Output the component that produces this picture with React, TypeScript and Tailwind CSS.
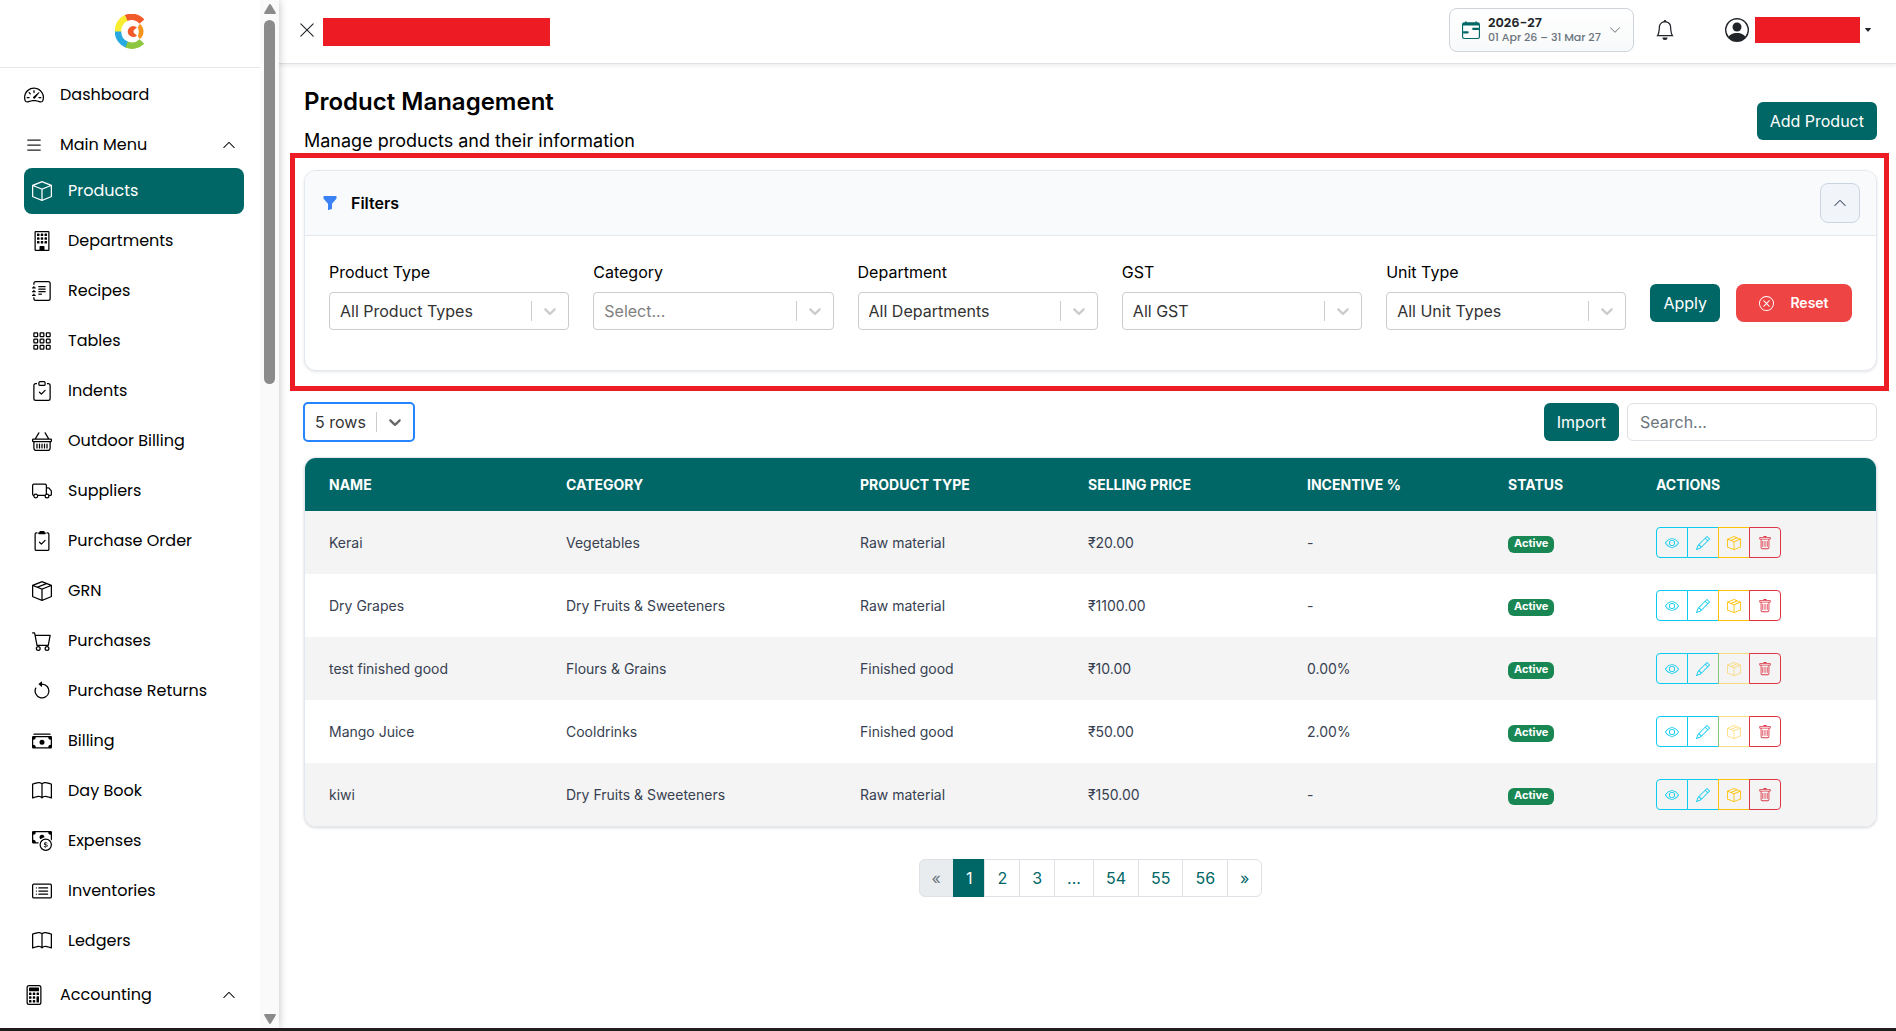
import React from "react";
import type { IconType } from "react-icons";
import {
  BsSpeedometer2, BsList, BsBox, BsBuilding, BsJournalText, BsGrid3X3Gap, BsClipboardCheck,
  BsBasket, BsTruck, BsClipboard2Check, BsBoxSeam, BsCart, BsArrowCounterclockwise, BsCashStack,
  BsBook, BsCashCoin, BsCardList, BsCalculator, BsChevronUp, BsChevronDown, BsXLg, BsCalendarRange,
  BsBell, BsPersonCircle, BsFunnelFill, BsXCircle, BsEye, BsPencil, BsTrash, BsCaretDownFill,
} from "react-icons/bs";

const menu: { label: string; icon: IconType }[] = [
  { label: "Products", icon: BsBox },
  { label: "Departments", icon: BsBuilding },
  { label: "Recipes", icon: BsJournalText },
  { label: "Tables", icon: BsGrid3X3Gap },
  { label: "Indents", icon: BsClipboardCheck },
  { label: "Outdoor Billing", icon: BsBasket },
  { label: "Suppliers", icon: BsTruck },
  { label: "Purchase Order", icon: BsClipboard2Check },
  { label: "GRN", icon: BsBoxSeam },
  { label: "Purchases", icon: BsCart },
  { label: "Purchase Returns", icon: BsArrowCounterclockwise },
  { label: "Billing", icon: BsCashStack },
  { label: "Day Book", icon: BsBook },
  { label: "Expenses", icon: BsCashCoin },
  { label: "Inventories", icon: BsCardList },
  { label: "Ledgers", icon: BsBook },
];

const filters = [
  { id: "product-type", label: "Product Type", value: "All Product Types" },
  { id: "category", label: "Category", value: "Select..." },
  { id: "department", label: "Department", value: "All Departments" },
  { id: "gst", label: "GST", value: "All GST" },
  { id: "unit-type", label: "Unit Type", value: "All Unit Types" },
];

const columns = ["Name", "Category", "Product Type", "Selling Price", "Incentive %", "Status", "Actions"];

const products = [
  { name: "Kerai", category: "Vegetables", type: "Raw material", price: "₹20.00", incentive: "-" },
  { name: "Dry Grapes", category: "Dry Fruits & Sweeteners", type: "Raw material", price: "₹1100.00", incentive: "-" },
  { name: "test finished good", category: "Flours & Grains", type: "Finished good", price: "₹10.00", incentive: "0.00%" },
  { name: "Mango Juice", category: "Cooldrinks", type: "Finished good", price: "₹50.00", incentive: "2.00%" },
  { name: "kiwi", category: "Dry Fruits & Sweeteners", type: "Raw material", price: "₹150.00", incentive: "-" },
];

const pages = ["2", "3", "...", "54", "55", "56", "»"];

function Logo() {
  return (
    <svg viewBox="0 0 30 35" className="h-[35px] w-[30px]" role="img" aria-label="Logo">
      <g fill="none" strokeWidth="6.5">
        <path d="M10.9 4.1A14 14 0 0 1 26.9 7.6" stroke="#f15a29" />
        <path d="M3.1 18.5A14 14 0 0 1 11.2 4" stroke="#f9ed32" />
        <path d="M12 30.7A14 14 0 0 1 3 17.5" stroke="#27aae1" />
        <path d="M26.9 27.4A14 14 0 0 1 11.6 30.6" stroke="#8dc63f" />
      </g>
      <path d="M25 10q3.5 3 3.5 7.5T25 25q-2-1.500-2-3.500 1.500-4 0-8 0-2 2-3.500z" fill="#f7941e" />
      <path d="M22 13.500A5.500 5.500 0 1 0 22 21.500L19.500 19.500A2.500 2.500 0 0 1 19.500 15.500z" fill="#f15a29" />
    </svg>
  );
}

function Chevron() {
  return (
    <svg viewBox="0 0 20 20" className="size-5 fill-current" aria-hidden="true">
      <path d="M4.516 7.548c0.436-0.446 1.043-0.481 1.576 0l3.908 3.747 3.908-3.747c0.533-0.481 1.141-0.446 1.574 0 0.436 0.445 0.408 1.197 0 1.615-0.406 0.418-4.695 4.502-4.695 4.502-0.217 0.223-0.502 0.335-0.787 0.335s-0.570-0.112-0.789-0.335c0 0-4.287-4.084-4.695-4.502s-0.436-1.170 0-1.615z" />
    </svg>
  );
}

function Sidebar() {
  return (
    <aside className="z-20 flex w-[279px] shrink-0 bg-white font-[Poppins,Inter,sans-serif] text-base text-black shadow-[0_0_8px_rgba(0,0,0,0.25)]">
      <div className="flex min-w-0 flex-1 flex-col overflow-hidden">
        <div className="flex h-[68px] shrink-0 items-center justify-center border-b border-[#e5e7eb] pb-1">
          <Logo />
        </div>
        <nav className="flex flex-col px-4 pt-1">
          <a href="#" className="mb-1 flex h-[46px] items-center gap-4 px-2">
            <BsSpeedometer2 className="size-5" />
            Dashboard
          </a>
          <button type="button" className="flex h-[46px] items-center gap-4 px-2 text-left">
            <BsList className="size-5 text-[#222]" />
            <span className="flex-1">Main Menu</span>
            <BsChevronUp className="size-3.5" />
          </button>
          <ul className="mb-1 pl-2">
            {menu.map(({ label, icon: Icon }, i) => (
              <li key={label} className="mb-1">
                <a
                  href="#"
                  className={`flex h-[46px] items-center gap-4 rounded-lg px-2 ${i === 0 ? "bg-[#006666] text-white" : ""}`}
                >
                  <Icon className="size-5" />
                  {label}
                </a>
              </li>
            ))}
          </ul>
          <button type="button" className="flex h-[46px] items-center gap-4 px-2 text-left">
            <BsCalculator className="size-5" />
            <span className="flex-1">Accounting</span>
            <BsChevronUp className="size-3.5" />
          </button>
        </nav>
      </div>
      <div className="flex w-[19px] flex-col items-center justify-between bg-[#fafafa] py-1" aria-hidden="true">
        <svg viewBox="0 0 12 10" className="h-2.5 w-3 fill-[#8b8b8b]"><path d="M6 0Q6.600 0 7 .8L11.700 8.500Q12.300 10 11 10H1Q-.3 10 .3 8.500L5 .8Q5.400 0 6 0z" /></svg>
        <div className="mt-1.5 w-[11px] flex-1">
          <div className="h-[364px] rounded-full bg-[#8b8b8b]" />
        </div>
        <svg viewBox="0 0 12 10" className="h-2.5 w-3 rotate-180 fill-[#8b8b8b]"><path d="M6 0Q6.600 0 7 .8L11.700 8.500Q12.300 10 11 10H1Q-.3 10 .3 8.500L5 .8Q5.400 0 6 0z" /></svg>
      </div>
    </aside>
  );
}

function Header() {
  return (
    <header className="z-10 flex h-16 shrink-0 items-center justify-between border-b border-[#dee2e6] bg-white pr-6 pb-1 pl-4 font-[Poppins,Inter,sans-serif] shadow-[0_2px_4px_rgba(0,0,0,0.07)]">
      <div className="flex items-center gap-1">
        <button type="button" aria-label="Close menu" className="flex size-6 items-center justify-center text-[#212529]">
          <BsXLg className="size-[18px]" />
        </button>
        <div className="mt-1 h-7 w-[227px] bg-[#ed1c24]" />
      </div>
      <div className="flex items-center">
        <button
          type="button"
          className="flex h-11 w-[185px] items-center gap-2 rounded-lg border border-[#ced4da] bg-linear-to-b from-white to-[#f8f9fa] pr-3 pl-3 text-left"
        >
          <BsCalendarRange className="size-[18px] shrink-0 text-[#006666]" />
          <span className="flex flex-1 flex-col whitespace-nowrap">
            <span className="text-[13px] leading-[15px] font-semibold text-[#212529]">2026-27</span>
            <span className="text-[11px] leading-[14px] font-medium text-[#6c757d]">01 Apr 26 – 31 Mar 27</span>
          </span>
          <BsChevronDown className="size-3 shrink-0 text-[#6c757d]" />
        </button>
        <button type="button" aria-label="Notifications" className="ml-[21px] text-[#212529]">
          <BsBell className="size-5" />
        </button>
        <button type="button" aria-label="Account" className="ml-[50px] flex items-center text-[#212529]">
          <BsPersonCircle className="size-6" />
          <span className="ml-1.5 h-[26px] w-[105px] bg-[#ed1c24]" />
          <BsCaretDownFill className="ml-1 size-2" />
        </button>
      </div>
    </header>
  );
}

function Filters() {
  return (
    <section className="relative mt-7">
      <div className="overflow-hidden rounded-xl border border-[#e2e8f0] bg-white shadow-[0_1px_3px_rgba(0,0,0,0.1)]">
        <div className="flex h-[65px] items-center justify-between border-b border-[#e2e8f0] bg-[#f8fafc] pr-4 pl-[17px]">
          <h2 className="flex items-center gap-[13px] text-base font-semibold text-black">
            <BsFunnelFill className="size-4 text-[#3b82f6]" />
            Filters
          </h2>
          <button type="button" aria-label="Collapse filters" className="flex size-10 items-center justify-center rounded-lg border border-[#cbd5e1] bg-[#f1f5f9] text-[#475569]">
            <BsChevronUp className="size-3.5" />
          </button>
        </div>
        <form className="flex h-[134px] gap-6 px-6 pt-6" onSubmit={(e) => e.preventDefault()}>
          {filters.map((f) => (
            <div key={f.id} className="min-w-0 flex-1">
              <label htmlFor={f.id} className="mb-2 block text-base leading-6 text-black">{f.label}</label>
              <div className="relative">
                <select
                  id={f.id}
                  className={`h-[38px] w-full appearance-none rounded border border-[#cccccc] bg-white px-2.5 text-base ${f.value === "Select..." ? "text-[#808080]" : "text-[#333333]"}`}
                >
                  <option>{f.value}</option>
                </select>
                <span className="pointer-events-none absolute inset-y-0 right-px flex items-center text-[#cccccc]">
                  <span className="h-5 w-px bg-[#cccccc]" />
                  <span className="px-2"><Chevron /></span>
                </span>
              </div>
            </div>
          ))}
          <div className="mt-6 flex items-start gap-4">
            <button type="submit" className="h-[38px] rounded-md bg-[#006666] px-[13px] text-base text-white">Apply</button>
            <button type="button" className="flex h-[38px] w-[116px] items-center justify-center gap-4 rounded-lg bg-[#ef4444] text-sm font-semibold text-white">
              <BsXCircle className="size-[15px]" />
              Reset
            </button>
          </div>
        </form>
      </div>
      <div className="pointer-events-none absolute -top-[17px] -right-3 -bottom-5 -left-3.5 border-5 border-[#ed1c24]" />
    </section>
  );
}

const actionBase = "-ml-px flex h-[31px] w-8 items-center justify-center border";

function RowActions({ stock }: { stock: boolean }) {
  return (
    <div className="flex pl-px">
      <button type="button" aria-label="View" className={`${actionBase} rounded-l border-[#0dcaf0] text-[#0dcaf0]`}><BsEye className="size-3.5" /></button>
      <button type="button" aria-label="Edit" className={`${actionBase} border-[#0dcaf0] text-[#0dcaf0]`}><BsPencil className="size-3.5" /></button>
      <button type="button" aria-label="Stock" disabled={!stock} className={`${actionBase} border-[#ffc107] text-[#ffc107] disabled:opacity-50`}><BsBoxSeam className="size-3.5" /></button>
      <button type="button" aria-label="Delete" className={`${actionBase} z-10 rounded-r border-[#dc3545] text-[#dc3545]`}><BsTrash className="size-3.5" /></button>
    </div>
  );
}

function ProductTable() {
  return (
    <div className="mt-[15px] overflow-hidden rounded-xl border border-[#e2e8f0] bg-white shadow-[0_1px_3px_rgba(0,0,0,0.15)]">
      <table className="w-full table-fixed text-left text-sm">
        <colgroup>
          <col className="w-[237px]" />
          <col className="w-[294px]" />
          <col className="w-[228px]" />
          <col className="w-[219px]" />
          <col className="w-[201px]" />
          <col className="w-[148px]" />
          <col className="w-[244px]" />
        </colgroup>
        <thead className="bg-[#006666] text-white">
          <tr className="h-[53px]">
            {columns.map((c) => (
              <th key={c} className="px-6 font-bold uppercase">{c}</th>
            ))}
          </tr>
        </thead>
        <tbody className="text-[#374151]">
          {products.map((p) => (
            <tr key={p.name} className="h-[63px] odd:bg-[#f4f4f4]">
              <td className="px-6">{p.name}</td>
              <td className="px-6">{p.category}</td>
              <td className="px-6">{p.type}</td>
              <td className="px-6">{p.price}</td>
              <td className="px-6">{p.incentive}</td>
              <td className="px-6">
                <span className="mt-0.5 inline-flex h-[17px] items-center rounded-md bg-[#198754] px-1.5 text-[11px] font-bold text-white">Active</span>
              </td>
              <td className="px-6"><RowActions stock={p.type === "Raw material"} /></td>
            </tr>
          ))}
        </tbody>
      </table>
    </div>
  );
}

function Pagination() {
  return (
    <nav aria-label="Pages" className="mt-8 flex justify-center text-base text-[#006666]">
      <button type="button" disabled className="h-[38px] rounded-l-md border border-[#dee2e6] bg-[#e9ecef] px-3 text-[#6c757d]">«</button>
      <button type="button" aria-current="page" className="-ml-px h-[38px] border border-[#006666] bg-[#006666] px-3 text-white">1</button>
      {pages.map((p) => (
        <button key={p} type="button" className="-ml-px h-[38px] border border-[#dee2e6] bg-white px-3 last:rounded-r-md">{p}</button>
      ))}
    </nav>
  );
}

export default function App() {
  return (
    <div className="flex h-screen flex-col bg-white font-[Inter,sans-serif]">
      <div className="flex min-h-0 flex-1">
        <Sidebar />
        <div className="flex min-w-0 flex-1 flex-col">
          <Header />
          <main className="min-h-0 flex-1 overflow-hidden pt-5 pr-[19px] pl-[25px]">
            <div className="flex items-start justify-between">
              <div>
                <h1 className="text-2xl leading-9 font-semibold text-black">Product Management</h1>
                <p className="mt-[7px] h-[31px] text-lg leading-[27px] text-black">Manage products and their information</p>
              </div>
              <button type="button" className="mt-[18px] h-[38px] rounded-md bg-[#006666] px-[13px] text-base text-white">Add Product</button>
            </div>
            <div className="-mt-4">
              <Filters />
            </div>
            <div className="mt-[31px] flex items-center justify-between">
              <div className="relative -ml-px">
                <select
                  aria-label="Rows per page"
                  className="h-10 w-28 appearance-none rounded-[5px] border-2 border-[#2684ff] bg-white px-2.5 text-base text-[#333333]"
                >
                  <option>5 rows</option>
                </select>
                <span className="pointer-events-none absolute inset-y-0 right-0.5 flex items-center text-[#666666]">
                  <span className="h-5 w-px bg-[#cccccc]" />
                  <span className="px-2"><Chevron /></span>
                </span>
              </div>
              <div className="flex gap-2">
                <button type="button" className="h-[38px] rounded-md bg-[#006666] px-[13px] text-base text-white">Import</button>
                <input
                  type="search"
                  aria-label="Search"
                  placeholder="Search..."
                  className="h-[38px] w-[250px] rounded-md border border-[#dee2e6] px-3 text-base placeholder:text-[#6c757d]"
                />
              </div>
            </div>
            <ProductTable />
            <Pagination />
          </main>
        </div>
      </div>
      <div className="h-[3px] shrink-0 bg-[#231f20]" />
    </div>
  );
}
